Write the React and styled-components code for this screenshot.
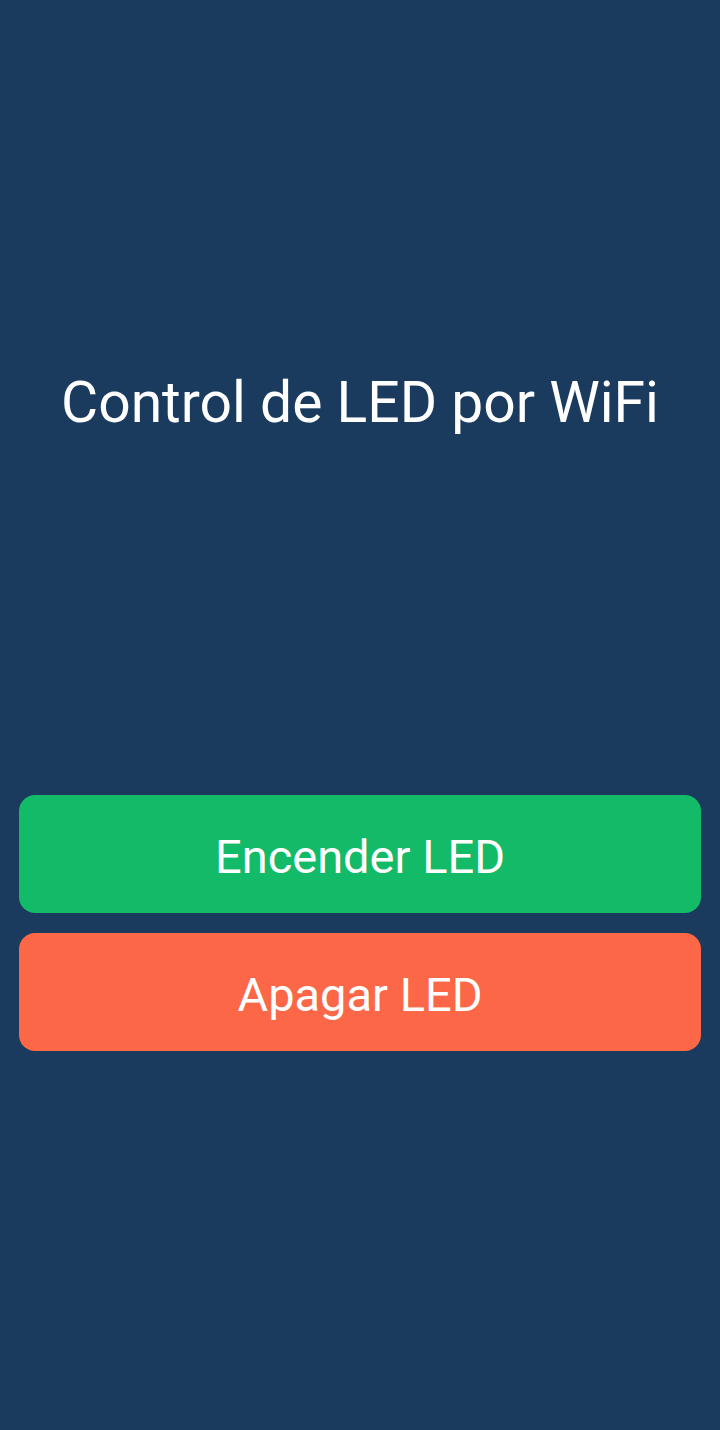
import React from "react";
import styled, { createGlobalStyle } from "styled-components";

const Global = createGlobalStyle`
  html, body {
    margin: 0;
    padding: 0;
    background: #1a3a5e;
  }
  body {
    font-family: Roboto, "Noto Sans", sans-serif;
  }
`;

function App() {
  const turnOn = () => {};
  const turnOff = () => {};

  return (
    <Page>
      <Global />
      <Title>Control de LED por WiFi</Title>
      <Buttons>
        <LedButton color="#13bb69" onClick={turnOn}>Encender LED</LedButton>
        <LedButton color="#fc6747" onClick={turnOff}>Apagar LED</LedButton>
      </Buttons>
    </Page>
  );
}

const Page = styled.div`
  min-height: 1430px;
  background: #1a3a5e;
  display: flex;
  flex-direction: column;
  padding-top: 370px;
  box-sizing: border-box;
`;

const Title = styled.h1`
  margin: 0;
  color: #fff;
  text-align: center;
  font-size: 57px;
  font-weight: 400;
  line-height: 66px;
`;

const Buttons = styled.div`
  margin-top: 359px;
  padding: 0 19px;
  display: flex;
  flex-direction: column;
  gap: 20px;
`;

const LedButton = styled.button`
  height: 118px;
  border: none;
  border-radius: 16px;
  background: ${(p) => p.color};
  color: #fff;
  font-family: Roboto, "Noto Sans", sans-serif;
  font-size: 47px;
  padding: 0;
  padding-top: 4px;
  cursor: pointer;
`;

export default App;
